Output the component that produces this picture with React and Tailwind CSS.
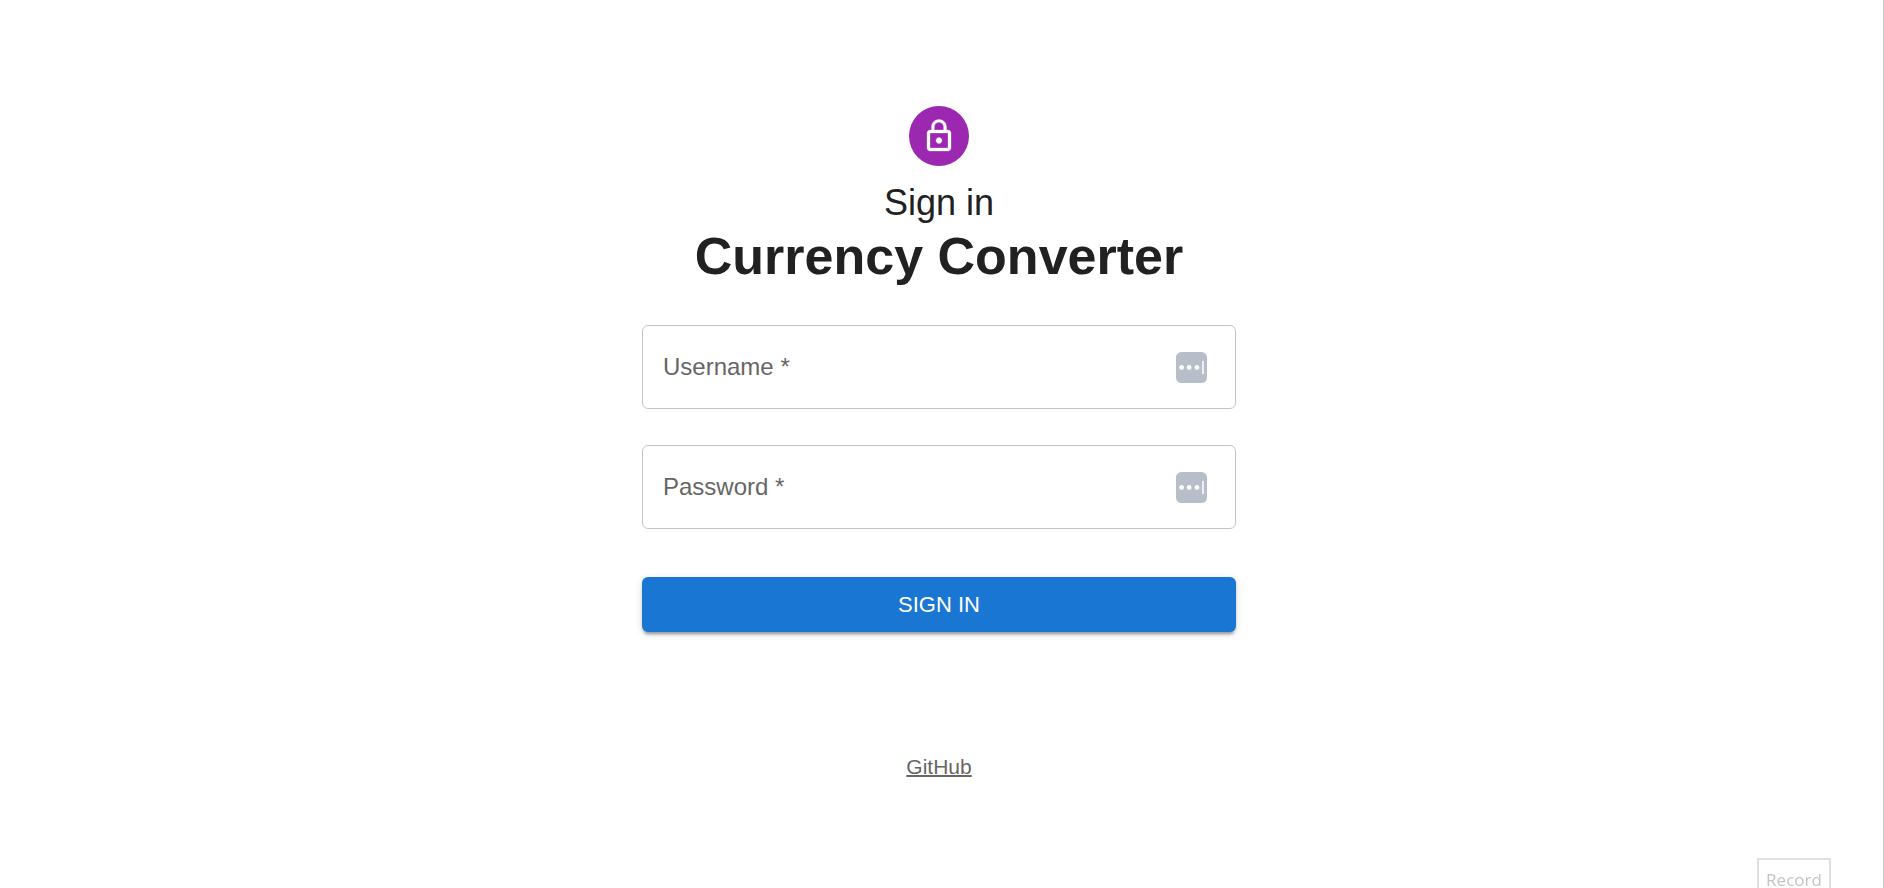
import { useState } from "react";

function LockIcon() {
  return (
    <svg viewBox="0 0 24 24" className="size-9 fill-white stroke-white stroke-[0.2]" aria-hidden="true">
      <path d="M12 17c1.1 0 2-.9 2-2s-.9-2-2-2-2 .9-2 2 .9 2 2 2zm6-9h-1V6c0-2.76-2.24-5-5-5S7 3.24 7 6v2H6c-1.1 0-2 .9-2 2v10c0 1.1.9 2 2 2h12c1.1 0 2-.9 2-2V10c0-1.1-.9-2-2-2zM8.9 6c0-1.71 1.39-3.1 3.1-3.1s3.1 1.39 3.1 3.1v2H8.9V6zM18 20H6V10h12v10z" />
    </svg>
  );
}

function AutofillIcon() {
  return (
    <svg viewBox="0 0 31 31" className="size-[31px]" aria-hidden="true">
      <rect width="31" height="31" rx="5.5" fill="#b7bec9" />
      <g fill="#fff">
        <circle cx="5.6" cy="15.5" r="2.4" />
        <circle cx="13.2" cy="15.5" r="2.4" />
        <circle cx="20.9" cy="15.5" r="2.4" />
      </g>
      <rect x="26" y="9" width="2" height="13" fill="#eef0f3" />
    </svg>
  );
}

function Field({ id, label, type }) {
  const [value, setValue] = useState("");
  return (
    <div className="flex h-[84px] items-center rounded-md border border-[#c4c4c4] pr-7 pl-5 text-2xl text-[#666]">
      <label htmlFor={id}>{label} *</label>
      <input
        id={id}
        type={type}
        required
        value={value}
        onChange={(e) => setValue(e.target.value)}
        className="min-w-0 flex-1 self-stretch bg-transparent px-3 outline-none"
      />
      <button type="button" aria-label={`Fill ${label}`}>
        <AutofillIcon />
      </button>
    </div>
  );
}

export default function App() {
  return (
    <div className="min-h-screen border-r border-[#c4c4c4] bg-white pr-[5px] font-['Liberation_Sans',Arial,sans-serif] text-[#212121]">
      <main className="mx-auto flex max-w-[666px] flex-col items-center px-9 pt-[106px]">
        <div className="flex size-[60px] items-center justify-center rounded-full bg-[#9c27b0]">
          <LockIcon />
        </div>
        <h1 className="mt-3 text-center">
          <span className="block text-4xl leading-[50px]">Sign in</span>
          <span className="block text-[52px] leading-[57px] font-bold">Currency Converter</span>
        </h1>
        <form className="mt-10 flex w-full flex-col gap-9" onSubmit={(e) => e.preventDefault()}>
          <Field id="username" label="Username" type="text" />
          <Field id="password" label="Password" type="password" />
          <button
            type="submit"
            className="mt-3 h-[55px] rounded-md bg-[#1976d2] text-[22px] text-white shadow-[0_5px_2px_-3px_rgba(0,0,0,0.2),0_3px_3px_0_rgba(0,0,0,0.14),0_2px_8px_0_rgba(0,0,0,0.12)]"
          >
            SIGN IN
          </button>
        </form>
        <a
          href="https://github.com"
          className="mt-[120px] text-[21px] leading-[30px] text-[#666] underline decoration-2"
        >
          GitHub
        </a>
      </main>
      <button
        type="button"
        className="fixed right-[53px] bottom-0 flex h-[30px] w-[74px] justify-center border-2 border-b-0 border-[#e0e0e0] bg-white pt-[10px] font-['Open_Sans','Noto_Sans',sans-serif] text-[17px] leading-5 text-[#c4c4c4]"
      >
        Record
      </button>
    </div>
  );
}
